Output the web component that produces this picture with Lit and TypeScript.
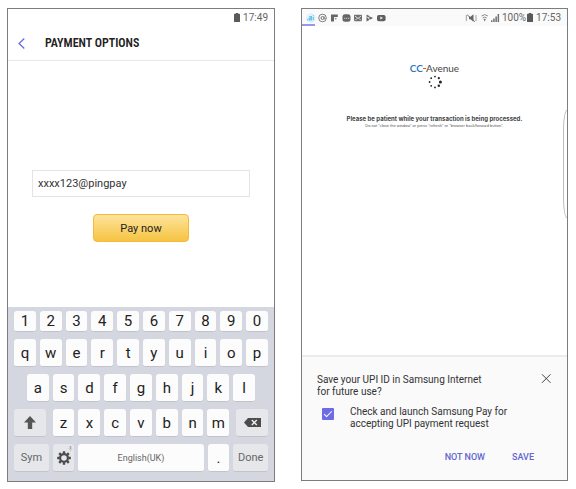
import { LitElement, html, svg, css, nothing } from "lit";
import { customElement, property } from "lit/decorators.js";

const battery = html`<svg class="battery" width="6" height="9" viewBox="0 0 6 9" aria-hidden="true">
  <path fill="#5a5a5a" d="M1.800 0h2.400v.8h1.200q.6 0 .6.6V8.400q0 .6-.6.6H.6Q0 9 0 8.400V1.400Q0 .8.6.8H1.800z" />
</svg>`;

@customElement("soft-keyboard")
export class SoftKeyboard extends LitElement {
  static styles = css`
    :host {
      display: block;
      background: #d4d7df;
      padding: 4px 4px 9px;
    }
    .row {
      display: grid;
      grid-template-columns: repeat(40, 1fr);
      margin-bottom: 7px;
    }
    .row:last-child {
      margin-bottom: 0;
    }
    button {
      font: 15px/20px Roboto, "Liberation Sans", sans-serif;
      grid-column-end: span 4;
      min-width: 0;
      height: 28px;
      margin: 0 2px;
      padding: 0;
      border: 0;
      border-radius: 3px;
      background: #fcfcfc;
      border-bottom: 1px solid #c0c3ca;
      color: #222;
      display: flex;
      align-items: center;
      justify-content: center;
    }
    .digits button {
      height: 21px;
    }
    .inset button:first-child {
      grid-column-start: 3;
    }
    .side {
      grid-column-end: span 6;
      background: #e6e7eb;
      color: #666;
      font-size: 11px;
    }
    .shift {
      margin-right: 5px;
    }
    .erase {
      margin-left: 5px;
    }
    .gear {
      background: #e6e7eb;
    }
    .space {
      grid-column-end: span 20;
      font-size: 9px;
      color: #666;
    }
  `;

  private key(k: string) {
    return html`<button type="button">${k}</button>`;
  }

  render() {
    return html`
      <div class="row digits">${[..."1234567890"].map(this.key)}</div>
      <div class="row">${[..."qwertyuiop"].map(this.key)}</div>
      <div class="row inset">${[..."asdfghjkl"].map(this.key)}</div>
      <div class="row">
        <button type="button" class="side shift" aria-label="Shift">
          <svg width="12" height="13" viewBox="0 0 12 13"><path fill="#555" d="M6 0l6 6.500H8.200V13H3.800V6.500H0z" /></svg>
        </button>
        ${[..."zxcvbnm"].map(this.key)}
        <button type="button" class="side erase" aria-label="Backspace">
          <svg width="17" height="9" viewBox="0 0 17 9">
            <path fill="#4c4c4c" d="M4 0H17V9H4L0 4.500z" />
            <path stroke="#f0f0f2" stroke-width="1.400" d="M7.800 2l5 5M12.800 2l-5 5" />
          </svg>
        </button>
      </div>
      <div class="row">
        <button type="button" class="side">Sym</button>
        <button type="button" class="gear" aria-label="Keyboard settings">
          <svg width="20" height="24" viewBox="0 0 20 24">
            <g fill="none" stroke="#4c4c4c" transform="translate(10 12)">
              <circle r="3.900" stroke-width="2.200" />
              ${[0, 45, 90, 135].map(
                (a) => svg`<path stroke-width="2.400" transform="rotate(${a})" d="M0-6.800V-4.500M0 4.500V6.800" />`
              )}
            </g>
            <path fill="none" stroke="#aaa" d="M16.500 0V3" stroke-width="1.600" />
            <path fill="none" stroke="#bbb" stroke-width=".6" d="M15 2.200Q15 4 16.500 4T18 2.200M16.500 4V5.500" />
          </svg>
        </button>
        <button type="button" class="space">English(UK)</button>
        <button type="button">.</button>
        <button type="button" class="side">Done</button>
      </div>
    `;
  }
}

@customElement("status-bar")
export class StatusBar extends LitElement {
  @property() time = "";
  @property({ type: Boolean }) full = false;

  static styles = css`
    :host {
      display: flex;
      align-items: center;
      height: 17px;
      padding: 0 6px 0 4px;
      font: 10px/16px Roboto, "Liberation Sans", sans-serif;
      color: #666;
    }
    :host([full]) {
      background: #fafafa;
    }
    .icons {
      display: flex;
      flex: 1;
      align-items: center;
    }
    svg {
      display: block;
    }
    .battery {
      margin: 0 3px 0 1px;
    }
    .signal {
      margin-right: 2px;
    }
  `;

  private notices() {
    return html`<svg width="80" height="10" viewBox="0 0 80 10" aria-hidden="true">
      <circle cx="5" cy="5" r="4.300" fill="#e4f3fa" stroke="#d3ebf6" stroke-width=".6" />
      <path fill="none" stroke="#62c3ea" stroke-width="1.200" d="M3.200 3.600H5.400V7H3.200V5.300H5.400M7.300 3.800V7.200M1 6.800h1.200M7.300 2.200V3" />
      <g fill="none" stroke="#707070">
        <circle cx="16.500" cy="5" r="3.800" stroke-width=".9" />
        <circle cx="16.500" cy="5" r="1.500" />
        <path stroke-width=".8" d="M18.200 3.500V5.500Q18.700 6.600 19.500 5.600" />
      </g>
      <path fill="#666" d="M25 1.500H31.800V4H28V8.500H25z" />
      <path fill="#999" d="M28.800 4.800H30.500V6.500H28.800z" />
      <rect x="36.500" y="1.300" width="8" height="7.400" rx="2.500" fill="#666" />
      <path stroke="#c8c8c8" d="M38 5.300h1.300M40 5.300h1M41.700 5.300h1.500" />
      <rect x="48" y="1.800" width="8" height="6.400" rx=".6" fill="#707070" />
      <path fill="none" stroke="#e8e8e8" stroke-width=".9" d="M49 3l3 2.500L55 3M49 7.400l2-2M55 7.400l-2-2" />
      <path fill="#666" d="M60.500 1.500L67 5 60.500 8.500z" />
      <path stroke="#fafafa" stroke-width=".8" d="M60.500 3.400L64.500 7.300M62 5L65.500 2.500" />
      <rect x="71" y="2" width="8.600" height="6.200" rx="1.800" fill="#606060" />
      <path fill="#f4f4f4" d="M74.300 3.600L77 5.100 74.300 6.600z" />
    </svg>`;
  }

  private signals() {
    return html`<svg class="signal" width="35" height="10" viewBox="0 0 35 10" aria-hidden="true">
      <path fill="#666" d="M4 3.700H5.500L8.500 1.300V8.700L5.500 6.300H4z" />
      <path fill="none" stroke="#888" stroke-width=".8" d="M1.300 2V8M11 2V8" />
      <path fill="none" stroke="#666" stroke-width="1" d="M2.200 1.800L9.800 8.600" />
      <path fill="none" stroke="#888" stroke-width="1" d="M16.500 3Q19.700.2 22.900 3M17.700 5Q19.700 3.200 21.700 5" />
      <path fill="#777" d="M18.500 6.300Q19.700 5.400 20.900 6.300L19.700 8.600z" />
      <path fill="#707070" d="M26 7.300h1.500V9H26zM28.200 5.500h1.500V9h-1.500zM30.400 3.500h1.500V9h-1.500zM32.600 1h1.500V9h-1.500z" />
    </svg>`;
  }

  render() {
    return html`
      <div class="icons">${this.full ? this.notices() : nothing}</div>
      ${this.full ? html`${this.signals()}<span>100%</span>` : nothing}
      ${battery}
      <span>${this.time}</span>
    `;
  }
}

@customElement("app-root")
export class AppRoot extends LitElement {
  static styles = css`
    :host {
      display: grid;
      grid-template-columns: 268fr 267fr;
      column-gap: 26px;
      align-items: start;
      padding: 8px 8px 7px 7px;
      background: #fff;
      font-family: Roboto, "Liberation Sans", sans-serif;
      color: #333;
    }
    .phone {
      position: relative;
      display: flex;
      flex-direction: column;
      border: 1px solid #7c7d7f;
      background: #fff;
    }
    button {
      font-family: inherit;
      padding: 0;
      border: 0;
      background: none;
    }
    svg {
      display: block;
    }
    header {
      display: flex;
      align-items: center;
      gap: 20px;
      height: 34px;
      padding-left: 10px;
      border-bottom: 1px solid #e8e8e8;
    }
    h1 {
      margin: 0;
      font-family: "Roboto Condensed", Roboto, sans-serif;
      font-size: 12px;
      line-height: 16px;
      font-weight: 600;
      color: #222;
    }
    .pay {
      display: flex;
      flex-direction: column;
      align-items: center;
      gap: 17px;
      padding: 109px 24px 65px;
    }
    .upi {
      box-sizing: border-box;
      width: 100%;
      height: 27px;
      padding: 0 5px;
      border: 1px solid #e4e4e4;
      font: 11px/16px Roboto, "Liberation Sans", sans-serif;
      color: #333;
      background: #fff;
    }
    .paynow {
      width: 96px;
      height: 28px;
      border: 1px solid #f5b93c;
      border-radius: 4px;
      background: linear-gradient(#fde39b, #f6c443);
      font-size: 11px;
      color: #222;
    }
    .progress {
      width: 13px;
      height: 2px;
      margin-top: -2px;
      background: #9696ec;
    }
    .page {
      display: flex;
      flex-direction: column;
      align-items: center;
      padding: 36px 0 227px;
      text-align: center;
    }
    .brand {
      display: flex;
      align-items: center;
      margin-bottom: 1px;
      font: 10px/12px Lato, "Open Sans", sans-serif;
      color: #444;
    }
    .cc {
      color: #1f74c4;
      font-weight: 600;
    }
    .dash {
      width: 3px;
      height: 1px;
      background: #e2503c;
    }
    .wait {
      margin: 26px 0 0;
      font-family: Inter, Roboto, sans-serif;
      font-size: 6px;
      line-height: 8px;
      font-weight: 700;
      color: #444;
    }
    .warn {
      margin: 0;
      font-family: "Liberation Sans", sans-serif;
      font-size: 4px;
      line-height: 5px;
      color: #555;
    }
    .edge {
      position: absolute;
      right: 0;
      top: 101px;
      width: 3px;
      height: 106px;
      border: 1px solid #bbb;
      border-right: 0;
      border-radius: 4px 0 0 4px / 20px 0 0 20px;
    }
    .sheet {
      border-top: 2px solid #ececec;
      background: #fafafa;
      padding: 17px 15px 17px;
      font-size: 10px;
      line-height: 12px;
    }
    .ask {
      display: flex;
      justify-content: space-between;
      align-items: flex-start;
    }
    .ask p {
      margin: 0;
    }
    .agree {
      display: flex;
      align-items: flex-start;
      gap: 16px;
      margin: 8px 0 0 5px;
    }
    .agree input {
      appearance: none;
      width: 12px;
      height: 12px;
      margin: 2px 0 0;
      border-radius: 1px;
      background: #6c6ce4;
      display: grid;
      place-items: center;
    }
    .agree input:checked::before {
      content: "";
      width: 7px;
      height: 3px;
      border: solid #fff;
      border-width: 0 0 1px 1px;
      transform: translateY(-1px) rotate(-45deg);
    }
    .actions {
      display: flex;
      justify-content: flex-end;
      gap: 27px;
      margin: 21px 18px 0 0;
    }
    .actions button {
      font-size: 9px;
      line-height: 12px;
      font-weight: 500;
      color: #6266d4;
    }
  `;

  private spinner() {
    const sizes = [0.9, 1.1, 1.5, 1.2, 0.9, 0.9, 0.9, 0.9];
    return html`<svg width="14" height="14" viewBox="-7 -7 14 14" role="img" aria-label="Loading">
      ${sizes.map((r, i) => {
        const a = (i * Math.PI) / 4 - Math.PI / 2;
        return svg`<circle cx=${5.4 * Math.cos(a)} cy=${5.4 * Math.sin(a)} r=${r} fill="#222" />`;
      })}
    </svg>`;
  }

  render() {
    return html`
      <section class="phone">
        <status-bar time="17:49"></status-bar>
        <header>
          <button type="button" aria-label="Back">
            <svg width="7" height="11" viewBox="0 0 7 11"><path fill="none" stroke="#6468dc" stroke-width="1.200" d="M6.300.5L1 5.500l5.300 5" /></svg>
          </button>
          <h1>PAYMENT OPTIONS</h1>
        </header>
        <div class="pay">
          <input class="upi" type="text" aria-label="UPI ID" value="xxxx123@pingpay" />
          <button type="button" class="paynow">Pay now</button>
        </div>
        <soft-keyboard></soft-keyboard>
      </section>

      <section class="phone">
        <status-bar full time="17:53"></status-bar>
        <div class="progress"></div>
        <div class="page">
          <div class="brand"><span class="cc">CC</span><i class="dash"></i><span>Avenue</span></div>
          ${this.spinner()}
          <p class="wait">Please be patient while your transaction is being processed.</p>
          <p class="warn">Do not "close the window" or press "refresh" or "browser back/forward button".</p>
        </div>
        <div class="edge"></div>
        <div class="sheet">
          <div class="ask">
            <p>Save your UPI ID in Samsung Internet<br />for future use?</p>
            <button type="button" aria-label="Close">
              <svg width="11" height="9" viewBox="0 0 11 9"><path stroke="#444" d="M1 .3l8.500 8.500M9.500.3L1 8.800" /></svg>
            </button>
          </div>
          <label class="agree">
            <input type="checkbox" checked />
            <span>Check and launch Samsung Pay for<br />accepting UPI payment request</span>
          </label>
          <div class="actions">
            <button type="button">NOT NOW</button>
            <button type="button">SAVE</button>
          </div>
        </div>
      </section>
    `;
  }
}
